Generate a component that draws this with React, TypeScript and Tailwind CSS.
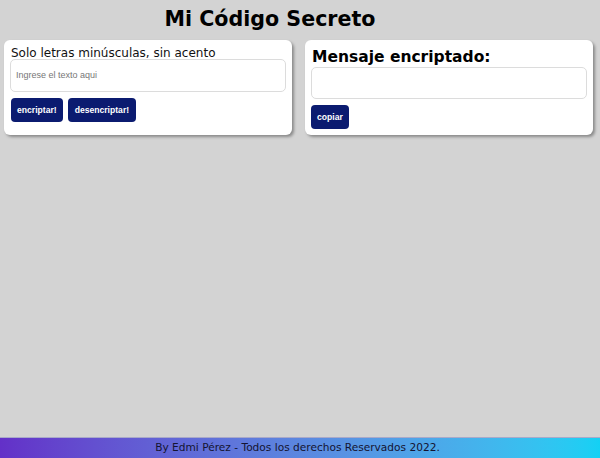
import React from "react";

export default function App() {
  return (
    <div className="min-h-screen flex flex-col bg-[#d3d3d3]" style={{ fontFamily: '"DejaVu Sans", sans-serif' }}>
      <h1 className="text-center pr-[60px] pt-[6px] text-[20.6px] font-bold leading-[26px] text-black">Mi Código Secreto</h1>
      <div className="grid grid-cols-2 gap-[13px] pl-[4px] pr-[7px] mt-[8px]">
        <div className="bg-white rounded-[6px] shadow-[2px_2px_3px_rgba(0,0,0,0.35)] px-[6px] pt-[7px] pb-[13px]">
          <p className="text-[12px] leading-[12px] text-[#111] pl-[1px]">Solo letras minúsculas, sin acento</p>
          <div className="h-[33px] border border-[#dcdcdc] rounded-[5px] flex items-center px-[5px]">
            <span className="text-[9px] text-[#777]" style={{ fontFamily: '"Liberation Sans", Arial, sans-serif' }}>Ingrese el texto aqui</span>
          </div>
          <div className="flex gap-[5px] mt-[6px] pl-[1px]" style={{ fontFamily: '"Liberation Sans", Arial, sans-serif' }}>
            <button className="h-[24px] px-[6px] rounded-[4px] bg-[#0b1b70] text-white text-[8.6px] font-bold">encriptar!</button>
            <button className="h-[24px] px-[7px] rounded-[4px] bg-[#0b1b70] text-white text-[8.6px] font-bold">desencriptar!</button>
          </div>
        </div>
        <div className="bg-white rounded-[6px] shadow-[2px_2px_3px_rgba(0,0,0,0.35)] px-[6px] pt-[7px] pb-[6px]">
          <h2 className="text-[15.5px] font-bold leading-[20px] text-black pl-[1px]">Mensaje encriptado:</h2>
          <div className="h-[32px] border border-[#dcdcdc] rounded-[5px]"></div>
          <div className="flex mt-[6px]" style={{ fontFamily: '"Liberation Sans", Arial, sans-serif' }}>
            <button className="h-[24px] px-[6px] rounded-[4px] bg-[#0b1b70] text-white text-[8.6px] font-bold">copiar</button>
          </div>
        </div>
      </div>
      <footer className="mt-auto h-[21px] border-t border-[#a9a9c9] bg-gradient-to-r from-[#6330c8] to-[#13d1f4] flex items-center justify-center pr-[5px]">
        <span className="text-[10.6px] text-[#141432]">By Edmi Pérez - Todos los derechos Reservados 2022.</span>
      </footer>
    </div>
  );
}
